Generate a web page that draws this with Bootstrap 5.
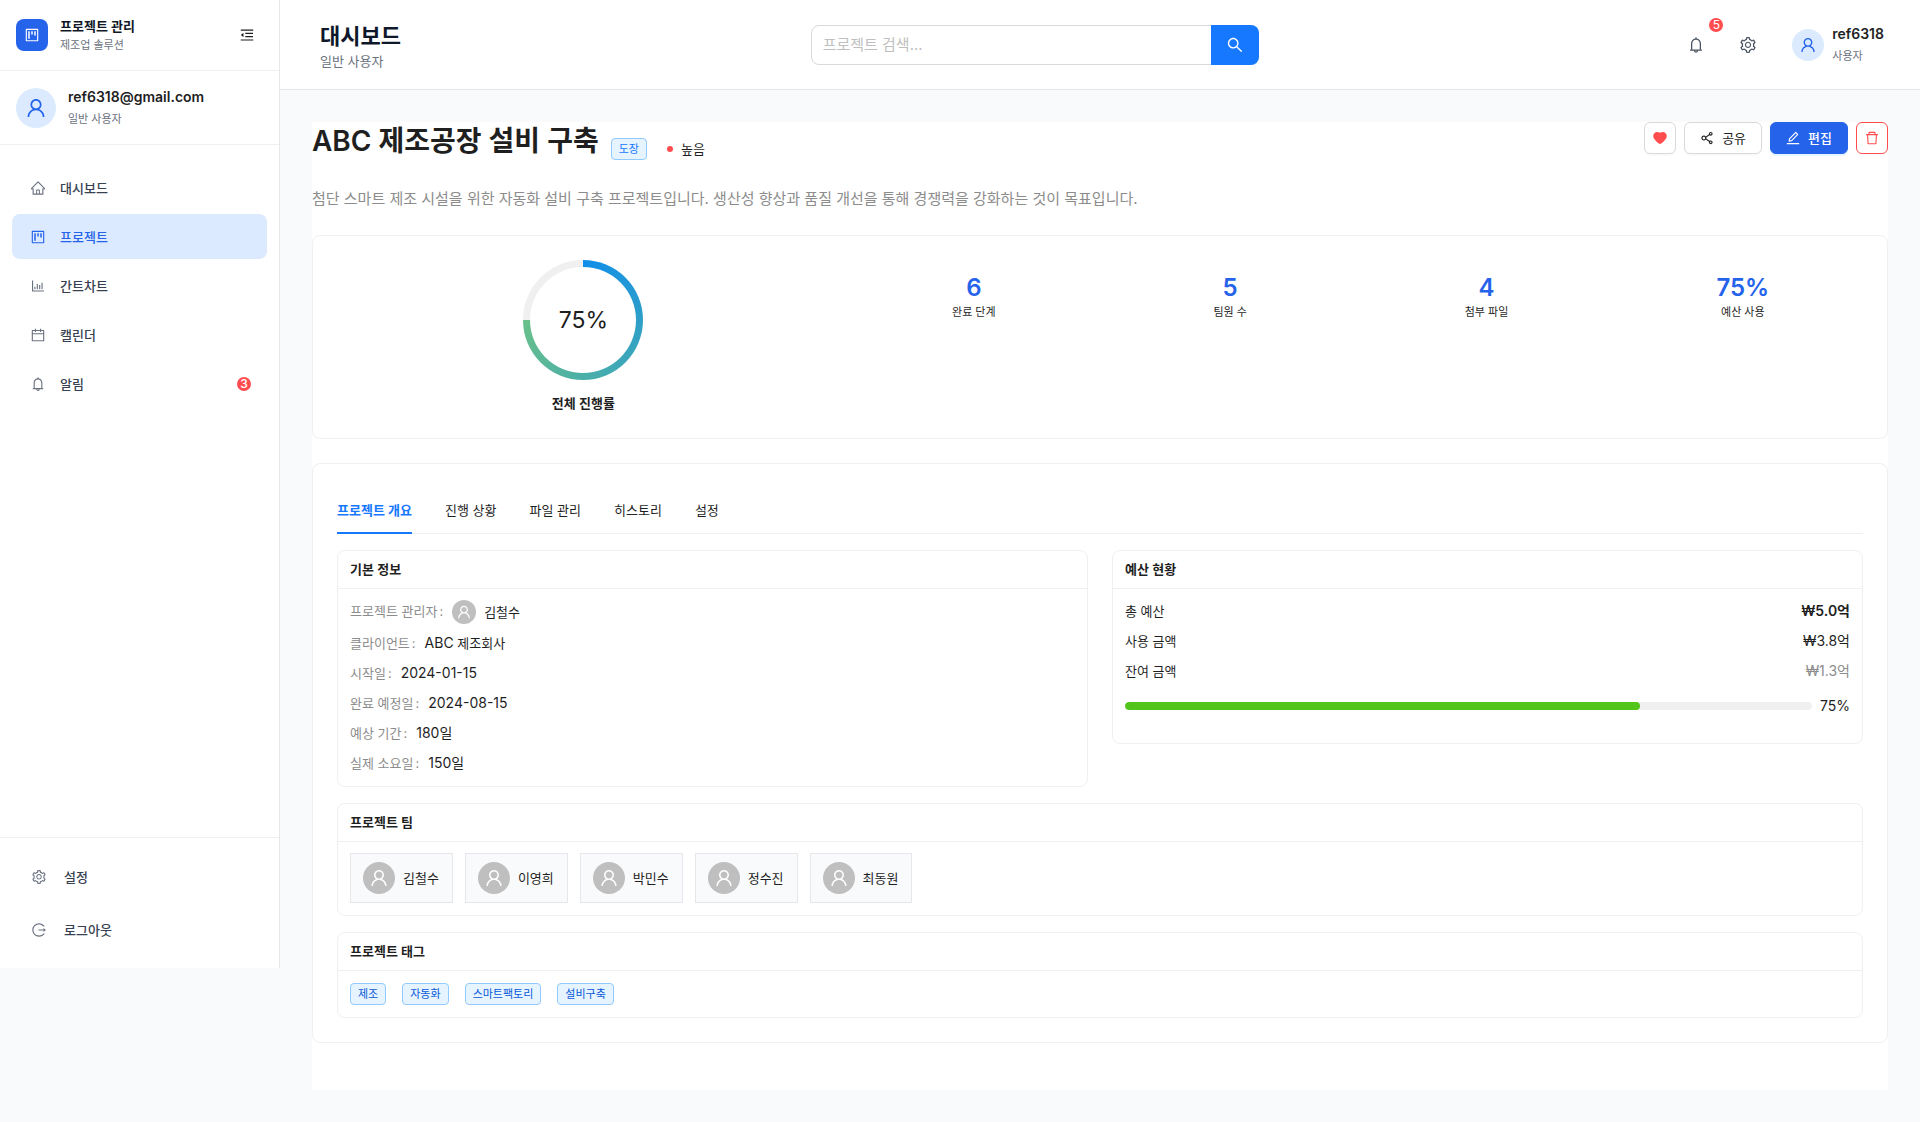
<!DOCTYPE html>
<html lang="ko">
<head>
<meta charset="utf-8">
<meta name="viewport" content="width=device-width, initial-scale=1">
<title>프로젝트 관리</title>
<link href="https://cdn.jsdelivr.net/npm/bootstrap@5.3.0/dist/css/bootstrap.min.css" rel="stylesheet">
<style>
  body { font-family: Inter, "Noto Sans CJK KR", sans-serif; font-size: 13px; line-height: 22px; color: #1f1f1f; background: #f8fafc; }
  a { text-decoration: none; color: inherit; }
  .pm-icon { width: 14px; height: 14px; fill: currentColor; flex-shrink: 0; display: block; }
  .pm-icon.pm-16 { width: 16px; height: 16px; }
  .pm-icon.pm-18 { width: 18px; height: 18px; }
  .pm-icon.pm-20 { width: 20px; height: 20px; }
  .pm-latin { font-size: 14px; }
  .pm-sub { font-size: 11px; color: #6b7280; }
  .pm-strong { font-weight: 600; }
  .pm-muted { color: #8c8c8c; }
  .gap-12 { gap: 12px; }
  .pm-face { width: 32px; height: 32px; border-radius: 50%; display: flex; align-items: center; justify-content: center; flex-shrink: 0; background: #dbeafe; color: #2563eb; }
  .pm-face-sm { width: 24px; height: 24px; }
  .pm-face-lg { width: 40px; height: 40px; }
  .pm-face-gray { background: #bfbfbf; color: #fff; }
  .pm-count { min-width: 14px; height: 14px; border-radius: 7px; background: #ff4d4f; color: #fff; font-size: 12px; line-height: 14px; text-align: center; }

  .pm-side { width: 280px; height: calc(100vh - 154px); background: #fff; border-right: 1px solid #e5e7eb; }
  .pm-side-head { padding: 0 16px; height: 71px; border-bottom: 1px solid #f0f0f0; }
  .pm-side-user { padding: 16px; height: 74px; border-bottom: 1px solid #f0f0f0; }
  .pm-logo { width: 32px; height: 32px; border-radius: 8px; background: #2563eb; color: #fff; }
  .pm-brand { line-height: 20px; color: #111827; }
  .pm-brand-sub { line-height: 18px; }
  .pm-fold { border: 0; background: none; padding: 0 9px; color: #1f1f1f; }
  .pm-menu { padding: 20px 12px; }
  .pm-menu a { height: 45px; margin-bottom: 4px; padding: 0 16px 0 19px; gap: 15px; border-radius: 8px; color: #374151; font-weight: 500; }
  .pm-menu a svg { color: #6b7280; }
  .pm-menu a.active, .pm-menu a.active svg { color: #2563eb; }
  .pm-menu a.active { background: #dbeafe; }
  .pm-side-foot { padding: 12px; border-top: 1px solid #f0f0f0; }
  .pm-side-foot a { height: 53px; padding: 0 20px; gap: 18px; color: #374151; font-weight: 500; }
  .pm-side-foot a svg { color: #6b7280; }

  .pm-top { height: 90px; padding: 0 24px 0 40px; background: #fff; border-bottom: 1px solid #e5e7eb; }
  .pm-page-name { font-size: 22px; line-height: 28px; font-weight: 600; color: #0f172a; margin: 0; }
  .pm-page-role { color: #6b7280; }
  .pm-search { max-width: 448px; }
  .pm-search .form-control { height: 40px; font-size: 15px; padding: 0 11px; border: 1px solid #d9d9d9; border-radius: 8px 0 0 8px; }
  .pm-search .form-control::placeholder { color: #bfbfbf; }
  .pm-search .btn { width: 48px; height: 40px; padding: 0; background: #1677ff; color: #fff; border: 0; border-radius: 0 8px 8px 0; display: flex; align-items: center; justify-content: center; }
  .pm-tool { width: 40px; height: 40px; padding: 0; border: 0; background: none; color: #4b5563; display: flex; align-items: center; justify-content: center; position: relative; }
  .pm-tool .pm-count { position: absolute; top: -7px; right: -7px; }
  .pm-me { padding: 0 12px; }

  .pm-main { padding: 32px; }
  .pm-sheet { background: #fff; min-height: calc(100vh - 154px); }
  .pm-title { font-size: 28px; line-height: 38px; font-weight: 600; margin: 0; }
  .pm-tag { display: inline-block; font-size: 11px; line-height: 20px; padding: 0 7px; border: 1px solid #91caff; border-radius: 4px; background: #e6f4ff; color: #0958d9; }
  .pm-tag-type { color: #1677ff; margin-right: 8px; }
  .pm-dot { width: 6px; height: 6px; border-radius: 50%; background: #ff4d4f; }
  .pm-btn { height: 32px; min-width: 32px; padding: 0 15px; gap: 8px; font-size: 13px; line-height: 22px; border: 1px solid #d9d9d9; border-radius: 6px; background: #fff; color: #1f1f1f; display: flex; align-items: center; justify-content: center; box-shadow: 0 2px 0 rgba(0,0,0,.02); }
  .pm-btn-icon { width: 32px; padding: 0; color: #ff4d4f; }
  .pm-btn-main { background: #2563eb; border-color: #2563eb; color: #fff; font-weight: 500; box-shadow: 0 2px 0 rgba(5,145,255,.1); }
  .pm-btn-del { border-color: #ff4d4f; }
  .pm-desc { font-size: 15px; line-height: 25px; margin: 26px 0 24px; color: #8c8c8c; }

  .pm-card { background: #fff; border: 1px solid #f0f0f0; border-radius: 8px; }
  .pm-card-pad { padding: 24px; }
  .pm-ring { width: 120px; height: 120px; border-radius: 50%; background: conic-gradient(#108ee9, #69c088 75%, #f0f0f0 75%); padding: 7px; margin: 0 auto 12px; }
  .pm-ring div { width: 100%; height: 100%; border-radius: 50%; background: #fff; font-size: 23px; display: flex; align-items: center; justify-content: center; }
  .pm-stat { padding-top: 16px; line-height: 24px; font-size: 11px; text-align: center; }
  .pm-stat strong { display: block; font-size: 24px; font-weight: 600; color: #2563eb; }

  .pm-tabs { gap: 33px; border-bottom: 1px solid #f0f0f0; margin-bottom: 16px; }
  .pm-tabs button { padding: 11px 0; margin-bottom: -1px; border: 0; border-bottom: 2px solid transparent; background: none; color: #1f1f1f; line-height: 22px; }
  .pm-tabs button.active { color: #1677ff; border-color: #1677ff; font-weight: 600; }
  .pm-box { margin-bottom: 16px; }
  .pm-box:last-child { margin-bottom: 0; }
  .pm-box h2 { height: 38px; line-height: 37px; padding: 0 12px; margin: 0; font-size: 13px; font-weight: 600; border-bottom: 1px solid #f0f0f0; }
  .pm-box-body { padding: 11px 12px 12px; }
  .pm-info { display: grid; gap: 8px; margin: 0; }
  .pm-info div { display: flex; gap: 9px; }
  .pm-info dt { font-weight: 400; color: #8c8c8c; }
  .pm-info dt::after { content: ":"; margin-left: 2px; }
  .pm-info dd { margin: 0; font-size: 14px; }
  .pm-info dd.pm-ko { font-size: 13px; }
  .pm-sums > div { margin-bottom: 8px; }
  .pm-used { padding: 4px 0 13px; line-height: 24px; }
  .pm-used .progress { height: 8px; border-radius: 4px; background: #f0f0f0; }
  .pm-used .progress-bar { background: #52c41a; border-radius: 4px; }
  .pm-member { height: 50px; padding: 0 13px 0 12px; border: 1px solid #e5e7eb; background: #f9fafb; }
  .pm-tags { gap: 16px; padding-top: 1px; }
</style>
<script src="https://cdn.jsdelivr.net/npm/bootstrap@5.3.0/dist/js/bootstrap.bundle.min.js"></script>
</head>
<body>
<svg width="0" height="0" class="position-absolute" aria-hidden="true">
  <symbol id="i-user" viewBox="64 64 896 896"><path d="M858.5 763.6a374 374 0 00-80.6-119.5 375.63 375.63 0 00-119.5-80.6c-.4-.2-.8-.3-1.2-.5C719.5 518 760 444.7 760 362c0-137-111-248-248-248S264 225 264 362c0 82.7 40.5 156 102.8 201.1-.4.2-.8.3-1.2.5-44.8 18.9-85 46-119.5 80.6a375.63 375.63 0 00-80.6 119.5A371.7 371.7 0 00136 901.8a8 8 0 008 8.2h60c4.4 0 7.9-3.5 8-7.8 2-77.2 33-149.5 87.8-204.3 56.7-56.7 132-87.9 212.2-87.9s155.5 31.2 212.2 87.9C779 752.7 810 825 812 902.2c.1 4.4 3.6 7.8 8 7.8h60a8 8 0 008-8.2c-1-47.8-10.9-94.3-29.5-138.2zM512 534c-45.9 0-89.1-17.9-121.6-50.4S340 407.9 340 362c0-45.9 17.9-89.1 50.4-121.6S466.1 190 512 190s89.1 17.9 121.6 50.4S684 316.1 684 362c0 45.9-17.9 89.1-50.4 121.6S557.9 534 512 534z"/></symbol>
  <symbol id="i-search" viewBox="64 64 896 896"><path d="M909.6 854.5L649.9 594.8C690.2 542.7 712 479 712 412c0-80.2-31.3-155.4-87.9-212.1-56.6-56.7-132-87.9-212.1-87.9s-155.5 31.3-212.1 87.9C143.2 256.5 112 331.8 112 412c0 80.1 31.3 155.5 87.9 212.1C256.5 680.8 331.8 712 412 712c67 0 130.6-21.8 182.7-62l259.7 259.6a8.2 8.2 0 0011.6 0l43.6-43.5a8.2 8.2 0 000-11.6zM570.4 570.4C528 612.7 471.8 636 412 636s-116-23.3-158.4-65.6C211.3 528 188 471.8 188 412s23.3-116.1 65.6-158.4C296 211.3 352.2 188 412 188s116.1 23.2 158.4 65.6S636 352.2 636 412s-23.3 116.1-65.6 158.4z"/></symbol>
  <symbol id="i-bell" viewBox="64 64 896 896"><path d="M816 768h-24V428c0-141.1-104.3-257.7-240-277.1V112c0-22.1-17.9-40-40-40s-40 17.9-40 40v38.9c-135.7 19.4-240 136-240 277.1v340h-24c-17.7 0-32 14.3-32 32v32c0 4.4 3.6 8 8 8h216c0 61.8 50.2 112 112 112s112-50.2 112-112h216c4.4 0 8-3.6 8-8v-32c0-17.7-14.3-32-32-32zM512 888c-26.5 0-48-21.5-48-48h96c0 26.5-21.5 48-48 48zM304 768V428c0-55.6 21.6-107.8 60.9-147.1S456.4 220 512 220c55.6 0 107.8 21.6 147.1 60.9S720 372.4 720 428v340H304z"/></symbol>
  <symbol id="i-home" viewBox="64 64 896 896"><path d="M946.5 505L560.1 118.8l-25.9-25.9a31.5 31.5 0 00-44.4 0L77.5 505a63.9 63.9 0 00-18.8 46c.4 35.2 29.7 63.3 64.9 63.3h42.5V940h691.8V614.3h43.4c17.1 0 33.2-6.7 45.3-18.8a63.6 63.6 0 0018.7-45.3c0-17-6.7-33.1-18.8-45.2zM568 868H456V664h112v204zm217.9-325.7V868H632V640c0-22.1-17.9-40-40-40H432c-22.1 0-40 17.9-40 40v228H238.1V542.3h-96l370-369.7 23.1 23.1L882 542.3h-96.1z"/></symbol>
  <symbol id="i-project" viewBox="64 64 896 896"><path d="M280 752h80c4.4 0 8-3.6 8-8V280c0-4.4-3.6-8-8-8h-80c-4.4 0-8 3.6-8 8v464c0 4.4 3.6 8 8 8zm192-280h80c4.4 0 8-3.6 8-8V280c0-4.4-3.6-8-8-8h-80c-4.4 0-8 3.6-8 8v184c0 4.4 3.6 8 8 8zm192 72h80c4.4 0 8-3.6 8-8V280c0-4.4-3.6-8-8-8h-80c-4.4 0-8 3.6-8 8v256c0 4.4 3.6 8 8 8zm216-432H144c-17.7 0-32 14.3-32 32v736c0 17.7 14.3 32 32 32h736c17.7 0 32-14.3 32-32V144c0-17.7-14.3-32-32-32zm-40 728H184V184h656v656z"/></symbol>
  <symbol id="i-chart" viewBox="64 64 896 896"><path d="M888 792H200V168c0-4.4-3.6-8-8-8h-56c-4.4 0-8 3.6-8 8v688c0 4.4 3.6 8 8 8h752c4.4 0 8-3.6 8-8v-56c0-4.4-3.6-8-8-8zm-600-80h56c4.4 0 8-3.6 8-8V560c0-4.4-3.6-8-8-8h-56c-4.4 0-8 3.6-8 8v144c0 4.4 3.6 8 8 8zm152 0h56c4.4 0 8-3.6 8-8V384c0-4.4-3.6-8-8-8h-56c-4.4 0-8 3.6-8 8v320c0 4.4 3.6 8 8 8zm152 0h56c4.4 0 8-3.6 8-8V462c0-4.4-3.6-8-8-8h-56c-4.4 0-8 3.6-8 8v242c0 4.4 3.6 8 8 8zm152 0h56c4.4 0 8-3.6 8-8V304c0-4.4-3.6-8-8-8h-56c-4.4 0-8 3.6-8 8v400c0 4.4 3.6 8 8 8z"/></symbol>
  <symbol id="i-calendar" viewBox="64 64 896 896"><path d="M880 184H712v-64c0-4.4-3.6-8-8-8h-56c-4.4 0-8 3.6-8 8v64H384v-64c0-4.4-3.6-8-8-8h-56c-4.4 0-8 3.6-8 8v64H144c-17.7 0-32 14.3-32 32v664c0 17.7 14.3 32 32 32h736c17.7 0 32-14.3 32-32V216c0-17.7-14.3-32-32-32zm-40 656H184V460h656v380zM184 392V256h128v48c0 4.4 3.6 8 8 8h56c4.4 0 8-3.6 8-8v-48h256v48c0 4.4 3.6 8 8 8h56c4.4 0 8-3.6 8-8v-48h128v136H184z"/></symbol>
  <symbol id="i-fold" viewBox="64 64 896 896"><path d="M408 442h480c4.4 0 8-3.6 8-8v-56c0-4.4-3.6-8-8-8H408c-4.4 0-8 3.6-8 8v56c0 4.4 3.6 8 8 8zm-8 204c0 4.4 3.6 8 8 8h480c4.4 0 8-3.6 8-8v-56c0-4.4-3.6-8-8-8H408c-4.4 0-8 3.6-8 8v56zm504-486H120c-4.4 0-8 3.6-8 8v56c0 4.4 3.6 8 8 8h784c4.4 0 8-3.6 8-8v-56c0-4.4-3.6-8-8-8zm0 632H120c-4.4 0-8 3.6-8 8v56c0 4.4 3.6 8 8 8h784c4.4 0 8-3.6 8-8v-56c0-4.4-3.6-8-8-8zM115.4 518.9L271.7 642c5.8 4.6 14.4.5 14.4-6.9V388.9c0-7.4-8.5-11.5-14.4-6.9L115.4 505.1a8.74 8.74 0 000 13.8z"/></symbol>
  <symbol id="i-setting" viewBox="64 64 896 896"><path d="M924.8 625.7l-65.5-56c3.1-19 4.7-38.4 4.7-57.8s-1.6-38.8-4.7-57.8l65.5-56a32.03 32.03 0 009.3-35.2l-.9-2.6a443.74 443.74 0 00-79.7-137.9l-1.8-2.1a32.12 32.12 0 00-35.1-9.5l-81.3 28.9c-30-24.6-63.5-44-99.7-57.6l-15.7-85a32.05 32.05 0 00-25.8-25.7l-2.7-.5c-52.1-9.4-106.9-9.4-159 0l-2.7.5a32.05 32.05 0 00-25.8 25.7l-15.8 85.4a351.86 351.86 0 00-99 57.4l-81.9-29.1a32 32 0 00-35.1 9.5l-1.8 2.1a446.02 446.02 0 00-79.7 137.9l-.9 2.6c-4.5 12.5-.8 26.5 9.3 35.2l66.3 56.6c-3.1 18.8-4.6 38-4.6 57.1 0 19.2 1.5 38.4 4.6 57.1L99 625.5a32.03 32.03 0 00-9.3 35.2l.9 2.6c18.1 50.4 44.9 96.9 79.7 137.9l1.8 2.1a32.12 32.12 0 0035.1 9.5l81.9-29.1c29.8 24.5 63.1 43.9 99 57.4l15.8 85.4a32.05 32.05 0 0025.8 25.7l2.7.5a449.4 449.4 0 00159 0l2.7-.5a32.05 32.05 0 0025.8-25.7l15.7-85a350 350 0 0099.7-57.6l81.3 28.9a32 32 0 0035.1-9.5l1.8-2.1c34.8-41.1 61.6-87.5 79.7-137.9l.9-2.6c4.5-12.3.8-26.3-9.3-35zM788.3 465.9c2.5 15.1 3.8 30.6 3.8 46.1s-1.3 31-3.8 46.1l-6.6 40.1 74.7 63.9a370.03 370.03 0 01-42.6 73.6L721 702.8l-31.4 25.8c-23.9 19.6-50.5 35-79.3 45.8l-38.1 14.3-17.9 97a377.5 377.5 0 01-85 0l-17.9-97.2-37.8-14.5c-28.5-10.8-55-26.2-78.7-45.7l-31.4-25.9-93.4 33.2c-17-22.9-31.2-47.6-42.6-73.6l75.5-64.5-6.5-40c-2.4-14.9-3.7-30.3-3.7-45.5 0-15.3 1.2-30.6 3.7-45.5l6.5-40-75.5-64.5c11.3-26.1 25.6-50.7 42.6-73.6l93.4 33.2 31.4-25.9c23.7-19.5 50.2-34.9 78.7-45.7l37.9-14.3 17.9-97.2c28.1-3.2 56.8-3.2 85 0l17.9 97 38.1 14.3c28.7 10.8 55.4 26.2 79.3 45.8l31.4 25.8 92.8-32.9c17 22.9 31.2 47.6 42.6 73.6L781.8 426l6.5 39.9zM512 326c-97.2 0-176 78.8-176 176s78.8 176 176 176 176-78.8 176-176-78.8-176-176-176zm79.2 255.2A111.6 111.6 0 01512 614c-29.9 0-58-11.7-79.2-32.8A111.6 111.6 0 01400 502c0-29.9 11.7-58 32.8-79.2C454 401.6 482.1 390 512 390c29.9 0 58 11.6 79.2 32.8A111.6 111.6 0 01624 502c0 29.9-11.7 58-32.8 79.2z"/></symbol>
  <symbol id="i-logout" viewBox="64 64 896 896"><path d="M868 732h-70.3c-4.8 0-9.3 2.1-12.3 5.8-7 8.5-14.5 16.7-22.4 24.5a353.84 353.84 0 01-112.7 75.9A352.8 352.8 0 01512.4 866c-47.9 0-94.3-9.4-137.9-27.8a353.84 353.84 0 01-112.7-75.9 353.28 353.28 0 01-76-112.5C167.3 606.2 158 559.9 158 512s9.4-94.2 27.8-137.8c17.8-42.1 43.4-80 76-112.5s70.5-58.1 112.7-75.9c43.6-18.4 90-27.8 137.9-27.8 47.9 0 94.3 9.3 137.9 27.8 42.2 17.8 80.1 43.4 112.7 75.9 7.9 7.9 15.3 16.1 22.4 24.5 3 3.7 7.6 5.8 12.3 5.8H868c6.3 0 10.2-7 6.7-12.3C798 160.5 663.8 81.6 511.3 82 271.7 82.6 79.6 277.1 82 516.4 84.4 751.9 276.2 942 512.4 942c152.1 0 285.7-78.8 362.3-197.7 3.4-5.3-.4-12.3-6.7-12.3zm88.9-226.3L815 393.7c-5.3-4.2-13-.4-13 6.3v76H488c-4.4 0-8 3.6-8 8v56c0 4.4 3.6 8 8 8h314v76c0 6.7 7.8 10.5 13 6.3l141.9-112a8 8 0 000-12.6z"/></symbol>
  <symbol id="i-heart" viewBox="64 64 896 896"><path d="M923 283.6a260.04 260.04 0 00-56.9-82.8 264.4 264.4 0 00-84-55.5A265.34 265.34 0 00679.7 125c-49.3 0-97.4 13.5-139.2 39-10 6.1-19.5 12.8-28.5 20.1-9-7.3-18.5-14-28.5-20.1-41.8-25.5-89.9-39-139.2-39-35.5 0-69.9 6.8-102.4 20.3-31.4 13-59.7 31.7-84 55.5a258.44 258.44 0 00-56.9 82.8c-13.9 32.3-21 66.6-21 101.9 0 33.3 6.8 68 20.3 103.3 11.3 29.5 27.5 60.1 48.2 91 32.8 48.9 77.9 99.9 133.9 151.6 92.8 85.7 184.7 144.9 188.6 147.3l23.7 15.2c10.5 6.7 24 6.7 34.5 0l23.7-15.2c3.9-2.5 95.7-61.6 188.6-147.3 56-51.7 101.1-102.7 133.9-151.6 20.7-30.9 37-61.5 48.2-91 13.5-35.3 20.3-70 20.3-103.3.1-35.3-7-69.6-20.9-101.9z"/></symbol>
  <symbol id="i-share" viewBox="64 64 896 896"><path d="M752 664c-28.5 0-54.8 10-75.4 26.7L469.4 540.8a160.68 160.68 0 000-57.6l207.2-149.9C697.2 350 723.5 360 752 360c66.2 0 120-53.8 120-120s-53.8-120-120-120-120 53.8-120 120c0 11.6 1.6 22.7 4.7 33.3L439.9 415.8C410.7 377.1 364.3 352 312 352c-88.4 0-160 71.6-160 160s71.6 160 160 160c52.3 0 98.7-25.1 127.9-63.8l196.8 142.5c-3.1 10.6-4.7 21.8-4.7 33.3 0 66.2 53.8 120 120 120s120-53.8 120-120-53.8-120-120-120zm0-476c28.7 0 52 23.3 52 52s-23.3 52-52 52-52-23.3-52-52 23.3-52 52-52zM312 600c-48.5 0-88-39.5-88-88s39.5-88 88-88 88 39.5 88 88-39.5 88-88 88zm440 236c-28.7 0-52-23.3-52-52s23.3-52 52-52 52 23.3 52 52-23.3 52-52 52z"/></symbol>
  <symbol id="i-edit" viewBox="64 64 896 896"><path d="M257.7 752c2 0 4-.2 6-.5L431.9 722c2-.4 3.9-1.3 5.3-2.8l423.9-423.9a9.96 9.96 0 000-14.1L694.9 114.9c-1.9-1.9-4.4-2.9-7.1-2.9s-5.2 1-7.1 2.9L256.8 538.8c-1.5 1.5-2.4 3.3-2.8 5.3l-29.5 168.2a33.5 33.5 0 009.4 29.8c6.6 6.4 14.9 9.9 23.8 9.9zm67.4-174.4L687.8 215l73.3 73.3-362.7 362.6-88.9 15.7 15.6-89zM880 836H144c-17.7 0-32 14.3-32 32v36c0 4.4 3.6 8 8 8h784c4.4 0 8-3.6 8-8v-36c0-17.7-14.3-32-32-32z"/></symbol>
  <symbol id="i-delete" viewBox="64 64 896 896"><path d="M360 184h-8c4.4 0 8-3.6 8-8v8h304v-8c0 4.4 3.6 8 8 8h-8v72h72v-80c0-35.3-28.7-64-64-64H352c-35.3 0-64 28.7-64 64v80h72v-72zm504 72H160c-17.7 0-32 14.3-32 32v32c0 4.4 3.6 8 8 8h60.4l24.7 523c1.6 34.1 29.8 61 63.9 61h454c34.2 0 62.3-26.8 63.9-61l24.7-523H888c4.4 0 8-3.6 8-8v-32c0-17.7-14.3-32-32-32zM731.3 840H292.7l-24.2-512h487l-24.2 512z"/></symbol>
</svg>

<div class="d-flex align-items-start">
  <aside class="pm-side d-flex flex-column flex-shrink-0">
    <div class="pm-side-head d-flex align-items-center gap-12">
      <div class="pm-logo d-flex align-items-center justify-content-center"><svg class="pm-icon"><use href="#i-project"/></svg></div>
      <div class="flex-grow-1">
        <div class="pm-brand pm-strong">프로젝트 관리</div>
        <div class="pm-sub pm-brand-sub">제조업 솔루션</div>
      </div>
      <button type="button" class="pm-fold" aria-label="메뉴 접기"><svg class="pm-icon"><use href="#i-fold"/></svg></button>
    </div>
    <div class="pm-side-user d-flex align-items-center gap-12">
      <div class="pm-face pm-face-lg"><svg class="pm-icon pm-20"><use href="#i-user"/></svg></div>
      <div>
        <div class="pm-latin pm-strong">ref6318@gmail.com</div>
        <div class="pm-sub">일반 사용자</div>
      </div>
    </div>
    <nav class="pm-menu flex-grow-1">
      <a href="#" class="d-flex align-items-center"><svg class="pm-icon"><use href="#i-home"/></svg>대시보드</a>
      <a href="#" class="d-flex align-items-center active" aria-current="page"><svg class="pm-icon"><use href="#i-project"/></svg>프로젝트</a>
      <a href="#" class="d-flex align-items-center"><svg class="pm-icon"><use href="#i-chart"/></svg>간트차트</a>
      <a href="#" class="d-flex align-items-center"><svg class="pm-icon"><use href="#i-calendar"/></svg>캘린더</a>
      <a href="#" class="d-flex align-items-center"><svg class="pm-icon"><use href="#i-bell"/></svg>알림<span class="pm-count ms-auto">3</span></a>
    </nav>
    <div class="pm-side-foot">
      <a href="#" class="d-flex align-items-center"><svg class="pm-icon"><use href="#i-setting"/></svg>설정</a>
      <a href="#" class="d-flex align-items-center"><svg class="pm-icon"><use href="#i-logout"/></svg>로그아웃</a>
    </div>
  </aside>

  <div class="flex-grow-1">
    <header class="pm-top d-flex align-items-center justify-content-between">
      <div class="pt-1">
        <h1 class="pm-page-name">대시보드</h1>
        <div class="pm-page-role">일반 사용자</div>
      </div>
      <form class="pm-search input-group" role="search">
        <input type="search" class="form-control" placeholder="프로젝트 검색..." aria-label="프로젝트 검색">
        <button type="submit" class="btn" aria-label="검색"><svg class="pm-icon pm-16"><use href="#i-search"/></svg></button>
      </form>
      <div class="d-flex align-items-center gap-12 ps-2">
        <button type="button" class="pm-tool" aria-label="알림"><svg class="pm-icon pm-16"><use href="#i-bell"/></svg><span class="pm-count">5</span></button>
        <button type="button" class="pm-tool" aria-label="설정"><svg class="pm-icon pm-16"><use href="#i-setting"/></svg></button>
        <a href="#" class="pm-me d-flex align-items-center gap-2">
          <span class="pm-face"><svg class="pm-icon pm-16"><use href="#i-user"/></svg></span>
          <span>
            <span class="pm-latin pm-strong d-block">ref6318</span>
            <span class="pm-sub d-block">사용자</span>
          </span>
        </a>
      </div>
    </header>

    <main class="pm-main">
      <div class="pm-sheet">
        <div class="d-flex justify-content-between align-items-start">
          <div class="d-flex align-items-end gap-12">
            <h2 class="pm-title">ABC 제조공장 설비 구축</h2>
            <span class="pm-tag pm-tag-type">도장</span>
            <span class="d-flex align-items-center gap-2"><span class="pm-dot"></span>높음</span>
          </div>
          <div class="d-flex gap-2">
            <button type="button" class="pm-btn pm-btn-icon" aria-label="즐겨찾기"><svg class="pm-icon"><use href="#i-heart"/></svg></button>
            <button type="button" class="pm-btn"><svg class="pm-icon"><use href="#i-share"/></svg>공유</button>
            <button type="button" class="pm-btn pm-btn-main"><svg class="pm-icon"><use href="#i-edit"/></svg>편집</button>
            <button type="button" class="pm-btn pm-btn-icon pm-btn-del" aria-label="삭제"><svg class="pm-icon"><use href="#i-delete"/></svg></button>
          </div>
        </div>
        <p class="pm-desc">첨단 스마트 제조 시설을 위한 자동화 설비 구축 프로젝트입니다. 생산성 향상과 품질 개선을 통해 경쟁력을 강화하는 것이 목표입니다.</p>

        <section class="pm-card pm-card-pad mb-4">
          <div class="row">
            <div class="col-4 text-center">
              <div class="pm-ring" role="progressbar" aria-label="전체 진행률" aria-valuenow="75" aria-valuemin="0" aria-valuemax="100"><div>75%</div></div>
              <div class="pm-strong">전체 진행률</div>
            </div>
            <div class="col-8">
              <div class="row gx-3">
                <div class="col-3 pm-stat"><strong>6</strong>완료 단계</div>
                <div class="col-3 pm-stat"><strong>5</strong>팀원 수</div>
                <div class="col-3 pm-stat"><strong>4</strong>첨부 파일</div>
                <div class="col-3 pm-stat"><strong>75%</strong>예산 사용</div>
              </div>
            </div>
          </div>
        </section>

        <section class="pm-card pm-card-pad">
          <div class="pm-tabs d-flex" role="tablist">
            <button type="button" role="tab" class="active" aria-selected="true">프로젝트 개요</button>
            <button type="button" role="tab">진행 상황</button>
            <button type="button" role="tab">파일 관리</button>
            <button type="button" role="tab">히스토리</button>
            <button type="button" role="tab">설정</button>
          </div>
          <div class="row align-items-start">
            <div class="col-6">
              <div class="pm-card pm-box mb-3">
                <h2>기본 정보</h2>
                <div class="pm-box-body">
                  <dl class="pm-info">
                    <div><dt>프로젝트 관리자</dt><dd class="pm-ko d-flex align-items-center gap-2"><span class="pm-face pm-face-sm pm-face-gray"><svg class="pm-icon"><use href="#i-user"/></svg></span>김철수</dd></div>
                    <div><dt>클라이언트</dt><dd class="pm-ko"><span class="pm-latin">ABC</span> 제조회사</dd></div>
                    <div><dt>시작일</dt><dd>2024-01-15</dd></div>
                    <div><dt>완료 예정일</dt><dd>2024-08-15</dd></div>
                    <div><dt>예상 기간</dt><dd>180일</dd></div>
                    <div><dt>실제 소요일</dt><dd>150일</dd></div>
                  </dl>
                </div>
              </div>
            </div>
            <div class="col-6">
              <div class="pm-card pm-box">
                <h2>예산 현황</h2>
                <div class="pm-box-body">
                  <div class="pm-sums">
                    <div class="d-flex justify-content-between"><span>총 예산</span><span class="pm-latin pm-strong">₩5.0억</span></div>
                    <div class="d-flex justify-content-between"><span>사용 금액</span><span class="pm-latin">₩3.8억</span></div>
                    <div class="d-flex justify-content-between"><span>잔여 금액</span><span class="pm-latin pm-muted">₩1.3억</span></div>
                  </div>
                  <div class="pm-used d-flex align-items-center gap-2">
                    <div class="progress flex-grow-1" role="progressbar" aria-label="예산 사용" aria-valuenow="75" aria-valuemin="0" aria-valuemax="100"><div class="progress-bar" style="width:75%"></div></div>
                    <span class="pm-latin">75%</span>
                  </div>
                </div>
              </div>
            </div>
          </div>
          <div class="pm-card pm-box">
            <h2>프로젝트 팀</h2>
            <div class="pm-box-body d-flex flex-wrap gap-12">
              <div class="pm-member d-flex align-items-center gap-2"><span class="pm-face pm-face-gray"><svg class="pm-icon pm-18"><use href="#i-user"/></svg></span>김철수</div>
              <div class="pm-member d-flex align-items-center gap-2"><span class="pm-face pm-face-gray"><svg class="pm-icon pm-18"><use href="#i-user"/></svg></span>이영희</div>
              <div class="pm-member d-flex align-items-center gap-2"><span class="pm-face pm-face-gray"><svg class="pm-icon pm-18"><use href="#i-user"/></svg></span>박민수</div>
              <div class="pm-member d-flex align-items-center gap-2"><span class="pm-face pm-face-gray"><svg class="pm-icon pm-18"><use href="#i-user"/></svg></span>정수진</div>
              <div class="pm-member d-flex align-items-center gap-2"><span class="pm-face pm-face-gray"><svg class="pm-icon pm-18"><use href="#i-user"/></svg></span>최동원</div>
            </div>
          </div>
          <div class="pm-card pm-box">
            <h2>프로젝트 태그</h2>
            <div class="pm-box-body">
              <div class="pm-tags d-flex flex-wrap">
                <span class="pm-tag">제조</span>
                <span class="pm-tag">자동화</span>
                <span class="pm-tag">스마트팩토리</span>
                <span class="pm-tag">설비구축</span>
              </div>
            </div>
          </div>
        </section>
      </div>
    </main>
  </div>
</div>
</body>
</html>
